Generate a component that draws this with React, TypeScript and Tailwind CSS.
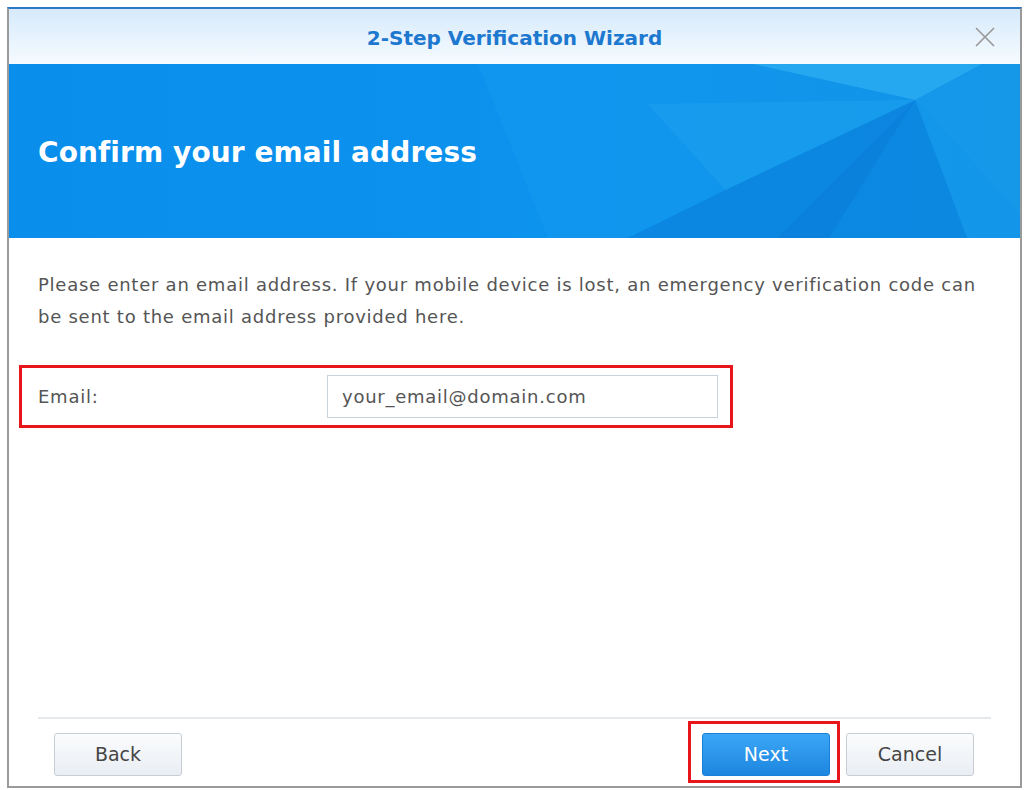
import { X } from "lucide-react";

function BannerArt() {
  return (
    <svg
      className="absolute inset-0 h-full w-full"
      viewBox="0 0 1013 174"
      preserveAspectRatio="none"
    >
      <defs>
        <linearGradient id="bg" x1="0" y1="0" x2="1" y2="0">
          <stop offset="0" stopColor="#0a8eec" />
          <stop offset="0.55" stopColor="#0c93ee" />
          <stop offset="1" stopColor="#0d8fe6" />
        </linearGradient>
      </defs>
      <rect width="1013" height="174" fill="url(#bg)" />
      {/* soft faceted shapes */}
      <polygon points="470,0 745,0 908,36 718,126 620,174 540,174" fill="#1aa0f0" opacity="0.3" />
      <polygon points="745,0 975,0 908,36" fill="#32b2f4" opacity="0.7" />
      <polygon points="975,0 1013,0 1013,150 908,36" fill="#1b9ceb" opacity="0.65" />
      <polygon points="908,36 718,126 620,174 770,174" fill="#0b80da" opacity="0.6" />
      <polygon points="908,36 770,174 822,174" fill="#0a74cf" opacity="0.55" />
      <polygon points="908,36 822,174 960,174" fill="#0b84dc" opacity="0.6" />
      <polygon points="908,36 960,174 1013,174 1013,150" fill="#1a9eec" opacity="0.5" />
      <polygon points="640,40 908,36 718,126" fill="#22aaf2" opacity="0.35" />
    </svg>
  );
}

export default function App() {
  return (
    <div className="min-h-[790px] bg-white pl-[7px] pt-[7px]">
      <div className="flex h-[781px] w-[1015px] flex-col border-2 border-x-[#9a9a9a] border-b-[#9a9a9a] border-t-[#2a78c6] bg-white font-['DejaVu_Sans',Verdana,sans-serif]">
        {/* Title bar */}
        <div className="relative flex h-[55px] shrink-0 items-center justify-center bg-gradient-to-b from-[#d6eafb] to-[#f6fbff] pt-[3px]">
          <span className="text-[20px] font-bold text-[#1d78cf]">
            2-Step Verification Wizard
          </span>
          <X className="absolute right-[18px] top-[11px] size-[34px] text-[#9a9a9a]" strokeWidth={1.2} />
        </div>

        {/* Banner */}
        <div className="relative flex h-[174px] shrink-0 items-center overflow-hidden">
          <BannerArt />
          <h1 className="relative ml-[29px] mt-[3px] text-[28px] font-bold tracking-[0.1px] text-white">
            Confirm your email address
          </h1>
        </div>

        {/* Body */}
        <div className="flex flex-1 flex-col px-[29px]">
          <p className="mt-[31px] text-[18px] leading-[32px] tracking-[0.75px] text-[#555]">
            Please enter an email address. If your mobile device is lost, an emergency verification code can be sent to the email address provided here.
          </p>

          <div className="ml-[-19px] mt-[32px] flex h-[63px] w-[714px] items-center border-[3px] border-[#e8161b] pl-[16px]">
            <span className="w-[289px] text-[18px] tracking-[0.75px] text-[#555]">Email:</span>
            <div className="flex h-[43px] w-[391px] items-center border border-[#c9d3dc] bg-white px-[14px] text-[18px] tracking-[0.75px] text-[#555]">
              your_email@domain.com
            </div>
          </div>

          <div className="flex-1" />

          <div className="border-t-2 border-[#e6e9ec]" />
          <div className="flex h-[67px] items-start pt-[14px]">
            <button className="ml-[16px] h-[43px] w-[128px] rounded-[3px] border border-[#c6cdd5] bg-gradient-to-b from-[#fbfcfd] to-[#e9eef3] text-[19px] text-[#454545]">
              Back
            </button>
            <div className="flex-1" />
            <div className="relative">
              <div className="absolute -left-[14px] -top-[12px] h-[62px] w-[152px] border-[3px] border-[#e8161b]" />
              <button className="relative h-[43px] w-[128px] rounded-[3px] border border-[#1a7fd6] bg-gradient-to-b from-[#3ba6f6] to-[#1c86e0] text-[19px] text-white">
                Next
              </button>
            </div>
            <button className="ml-[16px] mr-[17px] h-[43px] w-[128px] rounded-[3px] border border-[#c6cdd5] bg-gradient-to-b from-[#fbfcfd] to-[#e9eef3] text-[19px] text-[#454545]">
              Cancel
            </button>
          </div>
        </div>
      </div>
    </div>
  );
}
